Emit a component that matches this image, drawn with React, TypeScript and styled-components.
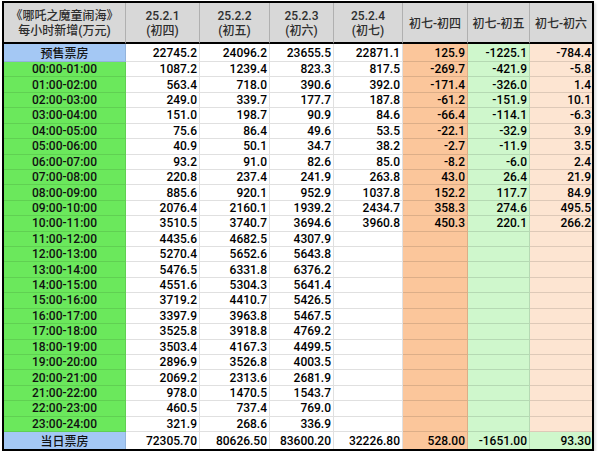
import React from 'react'
import styled, {createGlobalStyle} from 'styled-components'

const GlobalStyle = createGlobalStyle`
  html, body {
    margin: 0;
    padding: 0;
    background: #ffffff;
  }
  body {
    font-family: Roboto, "Noto Sans CJK SC", sans-serif;
  }
`

const Page = styled.div`
  padding: 1px 0 0 2px;
`

const Sheet = styled.div`
  display: grid;
  grid-template-columns: 122px 74px 70px 64px 69px 65px 62px 62px;
  grid-template-rows: 41px repeat(26, 1fr);
  width: 592px;
  height: 450px;
  box-sizing: border-box;
  border: 2px solid #000;
  box-shadow: 2px 2px 2px rgba(0, 0, 0, 0.12);
  font-size: 12px;
  font-weight: 500;
  color: #000;
`

const HeadCell = styled.div<{last?: boolean}>`
  display: flex;
  flex-direction: column;
  align-items: center;
  justify-content: center;
  padding-top: 3px;
  background: #d8d8d8;
  color: #2e2e2e;
  line-height: 15px;
  border-bottom: 2px solid #000;
  border-right: ${p => (p.last ? 'none' : '1px solid #b0b0b0')};
  box-sizing: border-box;
  white-space: nowrap;
`

const tones = {
  blue: '#a4c8f4',
  green: '#6be85c',
  white: '#ffffff',
  orange: '#fbc69b',
  mint: '#cff7cc',
  peach: '#fde5d2',
}

type Tone = keyof typeof tones

const LabelCell = styled.div<{tone: Tone; last?: boolean}>`
  display: flex;
  align-items: center;
  justify-content: center;
  background: ${p => tones[p.tone]};
  border-bottom: ${p => (p.last ? 'none' : '1px solid rgba(0, 0, 0, 0.1)')};
  border-right: 1px solid rgba(0, 0, 0, 0.1);
  box-sizing: border-box;
  white-space: nowrap;
  color: #111;
`

const NumCell = styled.div<{tone: Tone; lastRow?: boolean; lastCol?: boolean}>`
  display: flex;
  align-items: center;
  justify-content: flex-end;
  padding-right: ${p => (p.lastCol ? 1 : 2)}px;
  background: ${p => tones[p.tone]};
  border-bottom: ${p => (p.lastRow ? 'none' : '1px solid rgba(0, 0, 0, 0.12)')};
  border-right: ${p => (p.lastCol ? 'none' : '1px solid rgba(0, 0, 0, 0.12)')};
  box-sizing: border-box;
  white-space: nowrap;
`

const headers: [string, string?][] = [
  ['《哪吒之魔童闹海》', '每小时新增(万元)'],
  ['25.2.1', '(初四)'],
  ['25.2.2', '(初五)'],
  ['25.2.3', '(初六)'],
  ['25.2.4', '(初七)'],
  ['初七-初四'],
  ['初七-初五'],
  ['初七-初六'],
]

const rows: [string, string[]][] = [
  ['预售票房', ['22745.2', '24096.2', '23655.5', '22871.1', '125.9', '-1225.1', '-784.4']],
  ['00:00-01:00', ['1087.2', '1239.4', '823.3', '817.5', '-269.7', '-421.9', '-5.8']],
  ['01:00-02:00', ['563.4', '718.0', '390.6', '392.0', '-171.4', '-326.0', '1.4']],
  ['02:00-03:00', ['249.0', '339.7', '177.7', '187.8', '-61.2', '-151.9', '10.1']],
  ['03:00-04:00', ['151.0', '198.7', '90.9', '84.6', '-66.4', '-114.1', '-6.3']],
  ['04:00-05:00', ['75.6', '86.4', '49.6', '53.5', '-22.1', '-32.9', '3.9']],
  ['05:00-06:00', ['40.9', '50.1', '34.7', '38.2', '-2.7', '-11.9', '3.5']],
  ['06:00-07:00', ['93.2', '91.0', '82.6', '85.0', '-8.2', '-6.0', '2.4']],
  ['07:00-08:00', ['220.8', '237.4', '241.9', '263.8', '43.0', '26.4', '21.9']],
  ['08:00-09:00', ['885.6', '920.1', '952.9', '1037.8', '152.2', '117.7', '84.9']],
  ['09:00-10:00', ['2076.4', '2160.1', '1939.2', '2434.7', '358.3', '274.6', '495.5']],
  ['10:00-11:00', ['3510.5', '3740.7', '3694.6', '3960.8', '450.3', '220.1', '266.2']],
  ['11:00-12:00', ['4435.6', '4682.5', '4307.9']],
  ['12:00-13:00', ['5270.4', '5652.6', '5643.8']],
  ['13:00-14:00', ['5476.5', '6331.8', '6376.2']],
  ['14:00-15:00', ['4551.6', '5304.3', '5641.4']],
  ['15:00-16:00', ['3719.2', '4410.7', '5426.5']],
  ['16:00-17:00', ['3397.9', '3963.8', '5467.5']],
  ['17:00-18:00', ['3525.8', '3918.8', '4769.2']],
  ['18:00-19:00', ['3503.4', '4167.3', '4499.5']],
  ['19:00-20:00', ['2896.9', '3526.8', '4003.5']],
  ['20:00-21:00', ['2069.2', '2313.6', '2681.9']],
  ['21:00-22:00', ['978.0', '1470.5', '1543.7']],
  ['22:00-23:00', ['460.5', '737.4', '769.0']],
  ['23:00-24:00', ['321.9', '268.6', '336.9']],
  ['当日票房', ['72305.70', '80626.50', '83600.20', '32226.80', '528.00', '-1651.00', '93.30']],
]

// column tint for the three diff columns; the totals row turns the last one mint
function toneFor(col: number, isTotal: boolean): Tone {
  if (col === 4) return 'orange'
  if (col === 5) return 'mint'
  if (col === 6) return isTotal ? 'mint' : 'peach'
  return 'white'
}

export default function App() {
  return (
    <Page>
      <GlobalStyle />
      <Sheet>
        {headers.map(([a, b], i) => (
          <HeadCell key={'h' + i} last={i === headers.length - 1}>
            <span>{a}</span>
            {b && <span>{b}</span>}
          </HeadCell>
        ))}
        {rows.map(([label, values], r) => {
          const isFirst = r === 0
          const isTotal = r === rows.length - 1
          return (
            <React.Fragment key={label}>
              <LabelCell tone={isFirst || isTotal ? 'blue' : 'green'} last={isTotal}>
                {label}
              </LabelCell>
              {Array.from({length: 7}).map((_, c) => (
                <NumCell key={c} tone={toneFor(c, isTotal)} lastRow={isTotal} lastCol={c === 6}>
                  {values[c] ?? ''}
                </NumCell>
              ))}
            </React.Fragment>
          )
        })}
      </Sheet>
    </Page>
  )
}
